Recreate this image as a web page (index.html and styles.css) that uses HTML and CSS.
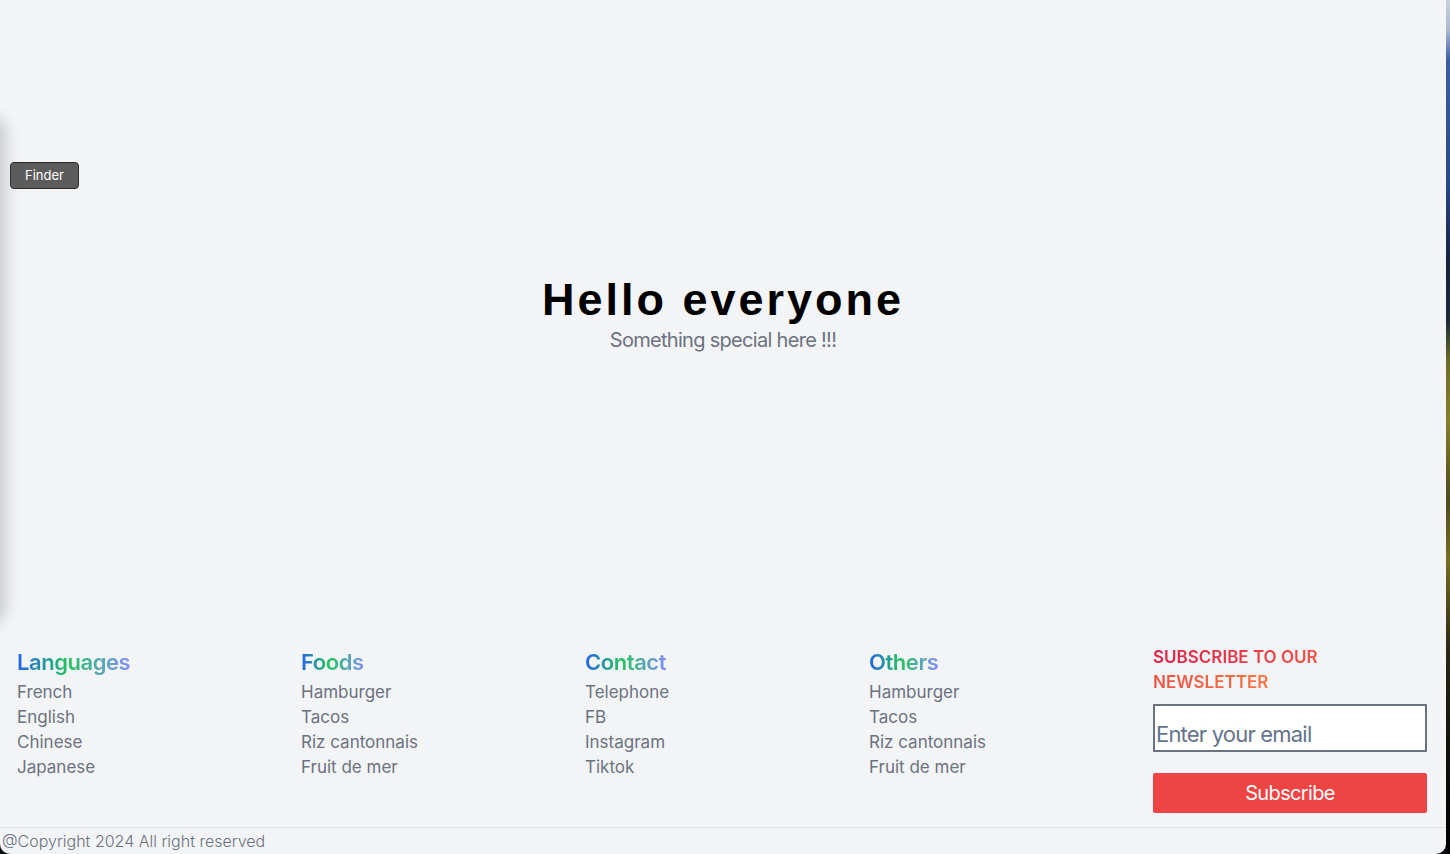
FILE: index.html
```html
<!DOCTYPE html>
<html lang="en">
<head>
<meta charset="utf-8">
<title>Hello everyone</title>
<link rel="stylesheet" href="styles.css">
</head>
<body>
<div class="screen">
  <div class="window">
    <div class="side-shadow"></div>
    <header class="topbar">
      <button class="finder">Finder</button>
    </header>
    <main class="hero">
      <h1 class="hero-title">Hello everyone</h1>
      <p class="hero-sub">Something special here !!!</p>
    </main>
    <footer class="footer">
      <div class="footer-grid">
        <div class="col">
          <h3 class="col-title">Languages</h3>
          <ul class="links">
            <li>French</li>
            <li>English</li>
            <li>Chinese</li>
            <li>Japanese</li>
          </ul>
        </div>
        <div class="col">
          <h3 class="col-title">Foods</h3>
          <ul class="links">
            <li>Hamburger</li>
            <li>Tacos</li>
            <li>Riz cantonnais</li>
            <li>Fruit de mer</li>
          </ul>
        </div>
        <div class="col">
          <h3 class="col-title">Contact</h3>
          <ul class="links">
            <li>Telephone</li>
            <li>FB</li>
            <li>Instagram</li>
            <li>Tiktok</li>
          </ul>
        </div>
        <div class="col">
          <h3 class="col-title">Others</h3>
          <ul class="links">
            <li>Hamburger</li>
            <li>Tacos</li>
            <li>Riz cantonnais</li>
            <li>Fruit de mer</li>
          </ul>
        </div>
        <div class="col newsletter">
          <h3 class="news-title"><span class="news-grad">SUBSCRIBE TO OUR NEWSLETTER</span></h3>
          <input class="email" type="email" placeholder="Enter your email">
          <button class="subscribe">Subscribe</button>
        </div>
      </div>
      <div class="copyright">@Copyright 2024 All right reserved</div>
    </footer>
  </div>
  <div class="desktop-strip"></div>
</div>
</body>
</html>
```

FILE: styles.css
```css
* { box-sizing: border-box; }

html, body {
  margin: 0;
  padding: 0;
  height: 100%;
}

body {
  background: #0d0f12;
  font-family: Inter, "Noto Sans", "Liberation Sans", sans-serif;
  overflow: hidden;
}

.screen {
  display: flex;
  height: 854px;
  width: 1450px;
}

.window {
  position: relative;
  flex: 1;
  background: #f3f4f6;
  border-bottom-left-radius: 10px;
  border-bottom-right-radius: 10px;
  display: flex;
  flex-direction: column;
  overflow: hidden;
}

.side-shadow {
  position: absolute;
  left: -30px;
  top: 122px;
  width: 30px;
  height: 496px;
  border-radius: 12px;
  box-shadow: 0 0 14px 6px rgba(110, 114, 122, 0.32);
}

.desktop-strip {
  width: 4px;
  height: 854px;
  background: linear-gradient(to bottom,
    #c9d1dc 0px, #a9b9d0 30px, #3e5f9e 60px, #2a4a86 180px,
    #14233f 260px, #1b2a36 320px, #6b6a2c 360px, #8a7d2a 420px,
    #4d4a1e 500px, #7a6c24 560px, #2a2714 650px, #0e0e0c 760px, #000 854px);
}

.topbar {
  padding: 162px 0 0 10px;
  height: 189px;
}

.finder {
  display: block;
  height: 27px;
  width: 69px;
  padding: 0;
  background: #5c5c5c;
  border: 1px solid #2b2b2b;
  border-radius: 4px;
  color: #ffffff;
  font-family: Inter, "Noto Sans", sans-serif;
  font-size: 13px;
  line-height: 25px;
}

.hero {
  padding-top: 84px;
  text-align: center;
  flex: 1;
}

.hero-title {
  margin: 0;
  font-family: "Liberation Sans", Arial, sans-serif;
  font-weight: 700;
  font-size: 45px;
  line-height: 54px;
  letter-spacing: 3px;
  color: #000000;
}

.hero-sub {
  margin: 0;
  font-size: 20px;
  line-height: 26px;
  letter-spacing: -0.7px;
  color: #6b7280;
}

.footer {
  height: 208px;
  display: flex;
  flex-direction: column;
}

.footer-grid {
  flex: 1;
  display: grid;
  grid-template-columns: repeat(5, 1fr);
  column-gap: 11px;
  padding: 0 19px 0 17px;
  border-bottom: 1px solid #e3e5e9;
}

.col {
  display: flex;
  flex-direction: column;
  align-items: flex-start;
}

.col-title {
  margin: 2px 0 4px;
  font-size: 22px;
  line-height: 28px;
  font-weight: 600;
  letter-spacing: -0.45px;
  display: inline-block;
  background: linear-gradient(to right, #2563eb 0%, #22c55e 45%, #818cf8 100%);
  -webkit-background-clip: text;
  background-clip: text;
  color: transparent;
}

.links {
  list-style: none;
  margin: 0;
  padding: 0;
}

.links li {
  font-size: 17px;
  line-height: 25px;
  color: #6b7280;
}

.newsletter {
  align-items: stretch;
}

.news-title {
  margin: -1px 0 9px;
  font-size: 17px;
  line-height: 25px;
  font-weight: 600;
}

.news-grad {
  background: linear-gradient(to right, #e11d48 0%, #f97342 100%);
  -webkit-background-clip: text;
  background-clip: text;
  color: transparent;
}

.email {
  width: 274px;
  height: 48px;
  margin: 0;
  padding: 12px 1px 0 1px;
  background: #ffffff;
  border: 2px solid #6b7280;
  border-radius: 1px;
  font-family: Inter, "Noto Sans", sans-serif;
  font-size: 22px;
  letter-spacing: -0.8px;
  color: #334155;
}

.email::placeholder {
  color: #64748b;
}

.subscribe {
  width: 274px;
  height: 40px;
  margin-top: 21px;
  padding: 0;
  background: #ef4444;
  border: none;
  border-radius: 2px;
  color: #ffffff;
  font-family: Inter, "Noto Sans", sans-serif;
  font-size: 20px;
  letter-spacing: -0.65px;
}

.copyright {
  height: 26px;
  padding-left: 2px;
  font-size: 16px;
  line-height: 26px;
  font-weight: 300;
  color: #6b7280;
}
```
